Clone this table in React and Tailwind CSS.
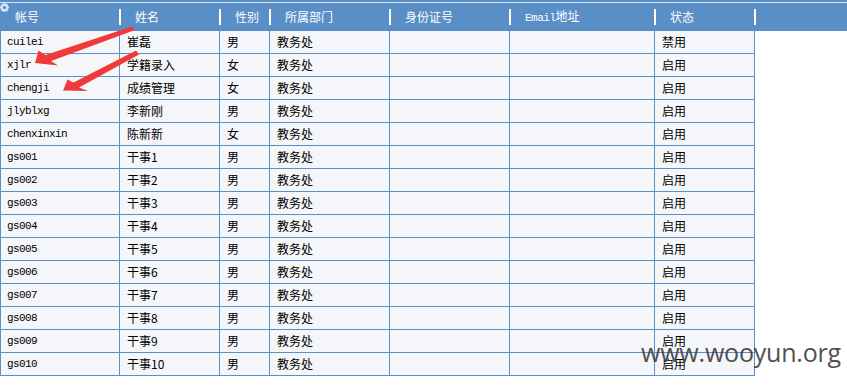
import React from "react";

const rows = [
  ["cuilei", "崔磊", "男", "教务处", "禁用"],
  ["xjlr", "学籍录入", "女", "教务处", "启用"],
  ["chengji", "成绩管理", "女", "教务处", "启用"],
  ["jlyblxg", "李新刚", "男", "教务处", "启用"],
  ["chenxinxin", "陈新新", "女", "教务处", "启用"],
  ["gs001", "干事1", "男", "教务处", "启用"],
  ["gs002", "干事2", "男", "教务处", "启用"],
  ["gs003", "干事3", "男", "教务处", "启用"],
  ["gs004", "干事4", "男", "教务处", "启用"],
  ["gs005", "干事5", "男", "教务处", "启用"],
  ["gs006", "干事6", "男", "教务处", "启用"],
  ["gs007", "干事7", "男", "教务处", "启用"],
  ["gs008", "干事8", "男", "教务处", "启用"],
  ["gs009", "干事9", "男", "教务处", "启用"],
  ["gs010", "干事10", "男", "教务处", "启用"],
];

const cjk = { fontFamily: '"Noto Sans CJK SC", "Noto Sans", sans-serif' };
const mono = { fontFamily: '"Liberation Mono", "Noto Sans CJK SC", monospace' };

function HeaderCell({ w, label, first, isMono }) {
  return (
    <div className={`${w} h-full flex items-center justify-between shrink-0`}>
      <span
        className={`${first ? "pl-[15px]" : "pl-[14px]"} text-white ${isMono ? "text-[11px] tracking-[-0.5px]" : "text-[12px]"} leading-none`}
        style={isMono ? mono : cjk}
      >
        {isMono ? (
          <>
            <span style={mono}>Email</span>
            <span style={cjk} className="text-[12px] tracking-normal">地址</span>
          </>
        ) : (
          label
        )}
      </span>
      <div className="w-[2px] h-[16px] bg-white" />
    </div>
  );
}

function Gear() {
  return (
    <svg width="9" height="9" viewBox="0 0 9 9" className="absolute left-0 top-[3px]">
      <g fill="#dbe9f8">
        <rect x="3.5" y="0" width="2" height="9" />
        <rect x="0" y="3.5" width="9" height="2" />
        <rect x="3.5" y="0" width="2" height="9" transform="rotate(45 4.5 4.5)" />
        <rect x="3.5" y="0" width="2" height="9" transform="rotate(-45 4.5 4.5)" />
        <circle cx="4.5" cy="4.5" r="3.2" />
      </g>
      <circle cx="4.5" cy="4.5" r="1.6" fill="#4f86c4" />
    </svg>
  );
}

export default function App() {
  return (
    <div className="relative w-[847px] h-[385px] bg-white overflow-hidden" style={cjk}>
      {/* header */}
      <div className="relative w-full h-[31px] bg-[#5a8ec7] flex flex-col">
        <div className="h-[2px]" />
        <div className="h-[1px] bg-[#d6e4f3]" />
        <div className="flex-1 flex items-center pb-[1px]">
          <HeaderCell w="w-[121px]" label="帐号" first />
          <HeaderCell w="w-[100px]" label="姓名" />
          <HeaderCell w="w-[50px]" label="性别" />
          <HeaderCell w="w-[120px]" label="所属部门" />
          <HeaderCell w="w-[120px]" label="身份证号" />
          <HeaderCell w="w-[145px]" label="Email地址" isMono />
          <HeaderCell w="w-[100px]" label="状态" />
        </div>
        <Gear />
      </div>

      {/* body */}
      <div className="w-[755px] flex flex-col border-l border-[#5b8fcb]">
        {rows.map((r, i) => (
          <div key={i} className="flex h-[23px] border-b border-[#5b8fcb] bg-[#f5f6f9] text-[12px] text-black">
            <div className="w-[119px] shrink-0 border-r border-[#5b8fcb] flex items-center pl-[6px] text-[11px] tracking-[-0.6px]" style={mono}>
              {r[0]}
            </div>
            <div className="w-[100px] shrink-0 border-r border-[#5b8fcb] flex items-center pl-[7px]">{r[1]}</div>
            <div className="w-[50px] shrink-0 border-r border-[#5b8fcb] flex items-center pl-[7px]">{r[2]}</div>
            <div className="w-[120px] shrink-0 border-r border-[#5b8fcb] flex items-center pl-[7px]">{r[3]}</div>
            <div className="w-[120px] shrink-0 border-r border-[#5b8fcb]" />
            <div className="w-[145px] shrink-0 border-r border-[#5b8fcb]" />
            <div className="w-[100px] shrink-0 border-r border-[#5b8fcb] flex items-center pl-[7px]">{r[4]}</div>
          </div>
        ))}
      </div>

      {/* red arrows */}
      <svg className="absolute left-0 top-0 pointer-events-none" width="847" height="385">
        <polygon
          points="132,26.5 135,30 51,61 58,65.5 35,63 38.5,50.5 45.5,55"
          fill="#f03a3a"
        />
        <polygon
          points="136,50.5 139,54.5 79,87.5 88,91 63,90.5 67.5,79.5 73.5,82.5"
          fill="#f03a3a"
        />
      </svg>

      {/* watermark */}
      <div
        className="absolute left-[641px] top-[340px] text-[25px] leading-none text-[#3e3e3e] opacity-90 tracking-[-0.2px]"
        style={{ fontFamily: '"Open Sans", "Noto Sans", sans-serif' }}
      >
        www.wooyun.org
      </div>
    </div>
  );
}
